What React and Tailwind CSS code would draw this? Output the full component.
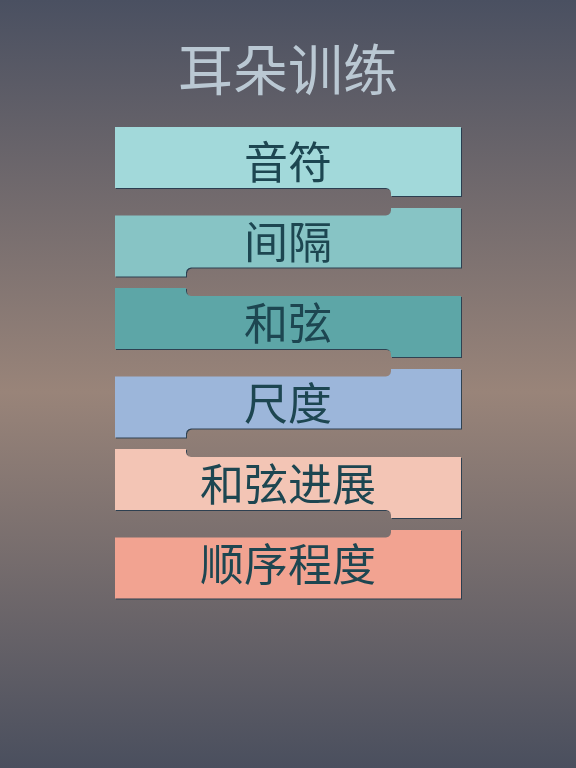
import React from 'react';

const items = [
  {
    label: '音符',
    color: 'bg-[#a2d9da]',
    shape: '[clip-path:polygon(0px_0px,346px_0px,346px_69px,276px_69px,276px_66px,275.3px_63.5px,273.5px_61.7px,271px_61px,0px_61px)]',
  },
  {
    label: '间隔',
    color: 'bg-[#87c4c5]',
    shape: '[clip-path:polygon(0px_8px,271px_8px,273.5px_7.3px,275.3px_5.5px,276px_3px,276px_0px,346px_0px,346px_60px,76px_60px,73.5px_60.7px,71.7px_62.5px,71px_65px,71px_69px,0px_69px)]',
  },
  {
    label: '和弦',
    color: 'bg-[#5da6a7]',
    shape: '[clip-path:polygon(0px_0px,71px_0px,71px_3px,71.7px_5.5px,73.5px_7.3px,76px_8px,346px_8px,346px_69px,276px_69px,276px_66px,275.3px_63.5px,273.5px_61.7px,271px_61px,0px_61px)]',
  },
  {
    label: '尺度',
    color: 'bg-[#9cb6da]',
    shape: '[clip-path:polygon(0px_8px,271px_8px,273.5px_7.3px,275.3px_5.5px,276px_3px,276px_0px,346px_0px,346px_60px,76px_60px,73.5px_60.7px,71.7px_62.5px,71px_65px,71px_69px,0px_69px)]',
  },
  {
    label: '和弦进展',
    color: 'bg-[#f3c5b5]',
    shape: '[clip-path:polygon(0px_0px,71px_0px,71px_3px,71.7px_5.5px,73.5px_7.3px,76px_8px,346px_8px,346px_69px,276px_69px,276px_66px,275.3px_63.5px,273.5px_61.7px,271px_61px,0px_61px)]',
  },
  {
    label: '顺序程度',
    color: 'bg-[#f2a391]',
    shape: '[clip-path:polygon(0px_8px,271px_8px,273.5px_7.3px,275.3px_5.5px,276px_3px,276px_0px,346px_0px,346px_69px,0px_69px)]',
  },
];

export default function App() {
  return (
    <div className="h-[768px] w-full overflow-hidden bg-[linear-gradient(to_bottom,#4a5061_0%,#998479_51%,#4a4f5e_100%)] font-['Noto_Sans_CJK_SC',sans-serif]">
      <h1 className="pt-[39px] text-center text-[55px] leading-none font-normal text-[#bac8d3]">
        耳朵训练
      </h1>

      <div className="mt-[33px] flex flex-col items-center gap-[11.5px]">
        {items.map((item) => (
          <div key={item.label} className="[filter:drop-shadow(1px_1px_0.5px_rgba(30,55,75,0.85))]">
            <div
              className={`flex h-[69px] w-[346px] items-center justify-center pb-[4px] ${item.color} ${item.shape}`}
            >
              <span className="text-[44px] leading-none text-[#1d4651]">{item.label}</span>
            </div>
          </div>
        ))}
      </div>
    </div>
  );
}
